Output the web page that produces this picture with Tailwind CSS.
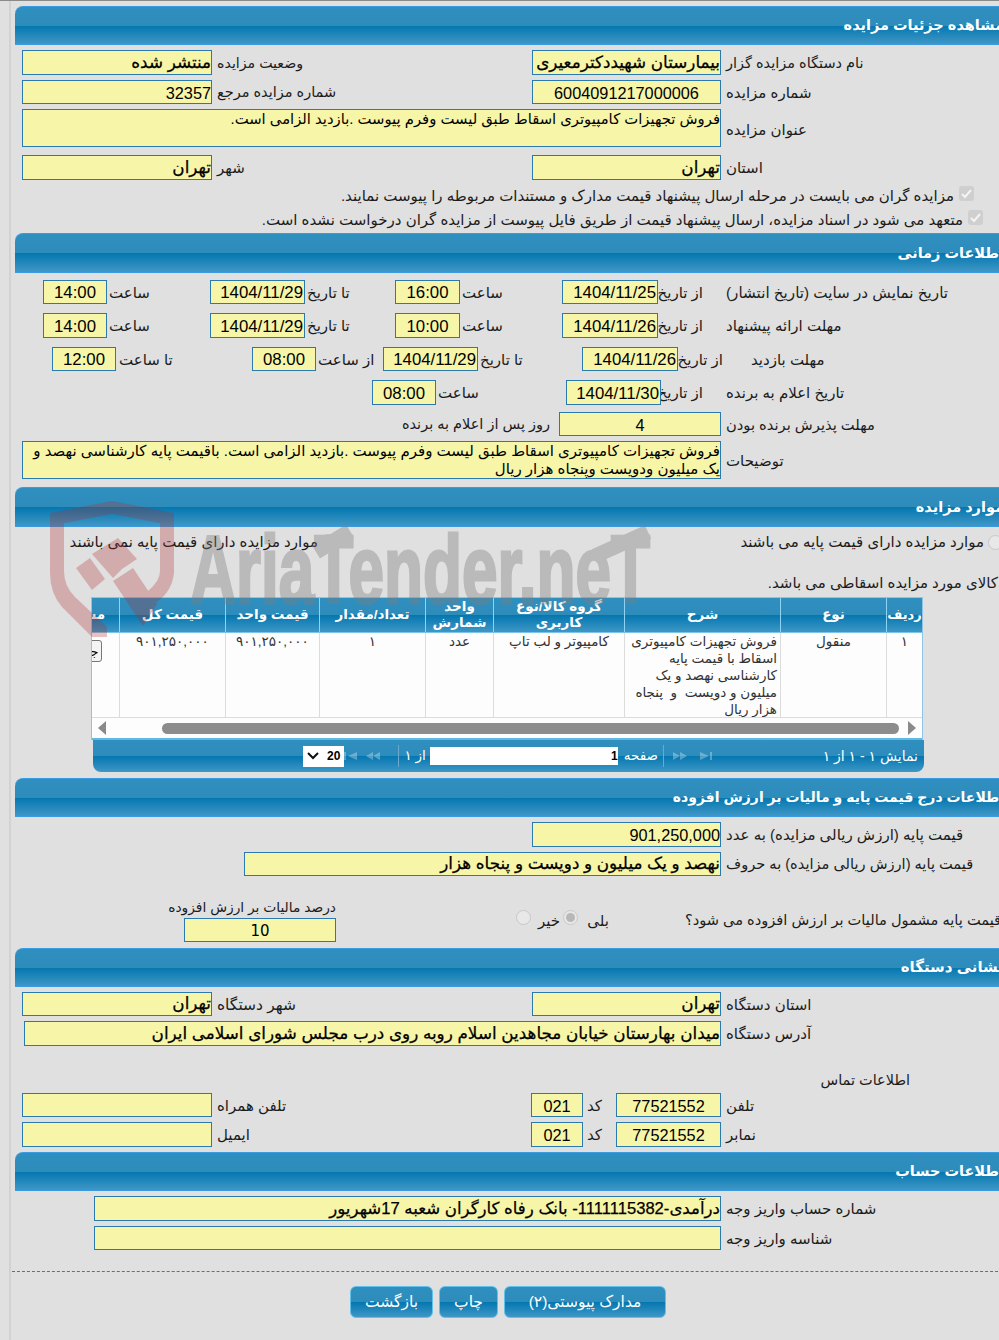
<!DOCTYPE html>
<html lang="fa">
<head>
    <meta charset="UTF-8">
    <title>مشاهده جزئیات مزایده</title>
    <script src="https://cdn.jsdelivr.net/npm/@tailwindcss/browser@4"></script>
</head>
<body class="relative h-[1340px] w-[999px] overflow-hidden border-t border-[#8a8a8a] bg-[#e0e0e0] font-['Liberation_Sans','DejaVu_Sans',sans-serif] text-[15px] text-[#1c1c1c]">
<div class="ml-[9px] h-[1339px] w-[1020px] border-l-2 border-[#d2d2d2] pl-[4px] pt-[5px]">
<div dir="rtl" class="w-[1003px]">

    <!-- جزئیات مزایده -->
    <div class="flex h-[39px] items-center rounded-tl-[8px] border-y border-[#3a9be0] bg-[linear-gradient(#2f8fbf_0%,#2e8cbb_50%,#0477b0_51%,#3f97c6_100%)] pr-[14px] text-[14.5px] font-bold text-white">مشاهده جزئیات مزایده</div>

    <div class="mt-[5px] flex h-[25px] items-center">
        <div class="w-[297px] pl-[5px] pt-[2px] text-left text-[14.5px]">نام دستگاه مزایده گزار</div>
        <div class="h-[25px] w-[189px] overflow-hidden whitespace-nowrap border border-[#2a7ab0] bg-[#f7f5a7] text-right text-[16.8px] leading-[23px] text-black [-webkit-text-stroke:0.25px_black]">بیمارستان شهیددکترمعیری</div>
        <div class="w-[320px] pl-[5px] pt-[2px] text-left text-[14.2px]">وضعیت مزایده</div>
        <div class="h-[25px] w-[190px] overflow-hidden whitespace-nowrap border border-[#2a7ab0] bg-[#f7f5a7] text-right text-[16.8px] leading-[23px] text-black [-webkit-text-stroke:0.25px_black]">منتشر شده</div>
    </div>
    <div class="mt-[5px] flex h-[24px] items-center">
        <div class="w-[297px] pl-[5px] pt-[2px] text-left">شماره مزایده</div>
        <div class="h-[24px] w-[189px] border border-[#2a7ab0] bg-[#f7f5a7] text-center text-[16.3px] leading-[24px] text-black">6004091217000006</div>
        <div class="w-[320px] pl-[5px] pt-[2px] text-left text-[14.5px]">شماره مزایده مرجع</div>
        <div class="h-[24px] w-[190px] border border-[#2a7ab0] bg-[#f7f5a7] text-right text-[16.3px] leading-[24px] text-black">32357</div>
    </div>
    <div class="mt-[5px] flex h-[38px] items-center">
        <div class="w-[297px] pl-[5px] pt-[5px] text-left">عنوان مزایده</div>
        <div class="h-[38px] w-[699px] border border-[#2a7ab0] bg-[#f7f5a7] text-right text-[14.8px] leading-[19px] text-black">فروش تجهیزات کامپیوتری اسقاط طبق لیست وفرم پیوست .بازدید الزامی است.</div>
    </div>
    <div class="mt-[8px] flex h-[25px] items-center">
        <div class="w-[297px] pl-[5px] pt-[2px] text-left">استان</div>
        <div class="h-[25px] w-[189px] border border-[#2a7ab0] bg-[#f7f5a7] text-right text-[16.8px] leading-[23px] text-black [-webkit-text-stroke:0.25px_black]">تهران</div>
        <div class="w-[320px] pl-[5px] pt-[2px] text-left">شهر</div>
        <div class="h-[25px] w-[190px] border border-[#2a7ab0] bg-[#f7f5a7] text-right text-[16.8px] leading-[23px] text-black [-webkit-text-stroke:0.25px_black]">تهران</div>
    </div>
    <div class="mt-[4px] flex h-[24px] items-center pr-[44px]">
        <svg class="mb-[6px] ml-[5px] size-[15px] rounded-[3px] bg-[#cfcfcf]" viewBox="0 0 15 15"><path d="M3 8l3 3 6-7" fill="none" stroke="#f4f4f4" stroke-width="2"/></svg>
        <span class="whitespace-nowrap">مزایده گران می بایست در مرحله ارسال پیشنهاد قیمت مدارک و مستندات مربوطه را پیوست نمایند.</span>
    </div>
    <div class="flex h-[24px] items-center pr-[35px]">
        <svg class="mb-[6px] ml-[5px] size-[15px] rounded-[3px] bg-[#cfcfcf]" viewBox="0 0 15 15"><path d="M3 8l3 3 6-7" fill="none" stroke="#f4f4f4" stroke-width="2"/></svg>
        <span class="whitespace-nowrap">متعهد می شود در اسناد مزایده، ارسال پیشنهاد قیمت از طریق فایل پیوست از مزایده گران درخواست نشده است.</span>
    </div>

    <!-- اطلاعات زمانی -->
    <div class="mt-[1px] flex h-[40px] items-center rounded-tl-[8px] border-y border-[#3a9be0] bg-[linear-gradient(#2f8fbf_0%,#2e8cbb_50%,#0477b0_51%,#3f97c6_100%)] pr-[14px] pt-[1px] text-[14.5px] font-bold text-white">اطلاعات زمانی</div>

    <div class="mt-[7px] flex h-[24px] items-center">
        <div class="w-[292px] pt-[2px] text-left text-[15.2px]">تاریخ نمایش در سایت (تاریخ انتشار)</div>
        <div class="w-[68px] whitespace-nowrap pr-[23px] pt-[2px] text-right">از تاریخ</div>
        <div class="h-[24px] w-[96px] border border-[#2a7ab0] bg-[#f7f5a7] pr-[1px] text-right text-[16.8px] leading-[24px] text-black" dir="ltr">1404/11/25</div>
        <div class="w-[102px] pl-[2px] pt-[2px] text-left">ساعت</div>
        <div class="h-[24px] w-[65px] border border-[#2a7ab0] bg-[#f7f5a7] text-center text-[16.8px] leading-[24px] text-black" dir="ltr">16:00</div>
        <div class="w-[90px] pl-[2px] pt-[2px] text-left">تا تاریخ</div>
        <div class="h-[24px] w-[95px] border border-[#2a7ab0] bg-[#f7f5a7] pr-[1px] text-right text-[16.8px] leading-[24px] text-black" dir="ltr">1404/11/29</div>
        <div class="w-[103px] pl-[2px] pt-[2px] text-left">ساعت</div>
        <div class="h-[24px] w-[64px] border border-[#2a7ab0] bg-[#f7f5a7] text-center text-[16.8px] leading-[24px] text-black" dir="ltr">14:00</div>
    </div>
    <div class="mt-[9px] flex h-[25px] items-center">
        <div class="w-[292px] pt-[2px] text-left">مهلت ارائه پیشنهاد</div>
        <div class="w-[68px] whitespace-nowrap pr-[23px] pt-[2px] text-right">از تاریخ</div>
        <div class="h-[25px] w-[96px] border border-[#2a7ab0] bg-[#f7f5a7] pr-[1px] text-right text-[16.8px] leading-[25px] text-black" dir="ltr">1404/11/26</div>
        <div class="w-[102px] pl-[2px] pt-[2px] text-left">ساعت</div>
        <div class="h-[25px] w-[65px] border border-[#2a7ab0] bg-[#f7f5a7] text-center text-[16.8px] leading-[25px] text-black" dir="ltr">10:00</div>
        <div class="w-[90px] pl-[2px] pt-[2px] text-left">تا تاریخ</div>
        <div class="h-[25px] w-[95px] border border-[#2a7ab0] bg-[#f7f5a7] pr-[1px] text-right text-[16.8px] leading-[25px] text-black" dir="ltr">1404/11/29</div>
        <div class="w-[103px] pl-[2px] pt-[2px] text-left">ساعت</div>
        <div class="h-[25px] w-[64px] border border-[#2a7ab0] bg-[#f7f5a7] text-center text-[16.8px] leading-[25px] text-black" dir="ltr">14:00</div>
    </div>
    <div class="mt-[9px] flex h-[24px] items-center">
        <div class="w-[267px] pt-[2px] text-left">مهلت بازدید</div>
        <div class="w-[73px] whitespace-nowrap pr-[28px] pt-[2px] text-right">از تاریخ</div>
        <div class="h-[24px] w-[96px] border border-[#2a7ab0] bg-[#f7f5a7] pr-[1px] text-right text-[16.8px] leading-[24px] text-black" dir="ltr">1404/11/26</div>
        <div class="w-[104px] pl-[2px] pt-[2px] text-left">تا تاریخ</div>
        <div class="h-[24px] w-[95px] border border-[#2a7ab0] bg-[#f7f5a7] pr-[1px] text-right text-[16.8px] leading-[24px] text-black" dir="ltr">1404/11/29</div>
        <div class="w-[67px] pl-[2px] pt-[2px] text-left">از ساعت</div>
        <div class="h-[24px] w-[64px] border border-[#2a7ab0] bg-[#f7f5a7] text-center text-[16.8px] leading-[24px] text-black" dir="ltr">08:00</div>
        <div class="w-[136px] whitespace-nowrap pl-[3px] pt-[2px] text-left">تا ساعت</div>
        <div class="h-[24px] w-[64px] border border-[#2a7ab0] bg-[#f7f5a7] text-center text-[16.8px] leading-[24px] text-black" dir="ltr">12:00</div>
    </div>
    <div class="mt-[9px] flex h-[25px] items-center">
        <div class="w-[292px] pt-[2px] text-left">تاریخ اعلام به برنده</div>
        <div class="w-[65px] whitespace-nowrap pr-[23px] pt-[2px] text-right">از تاریخ</div>
        <div class="h-[25px] w-[95px] border border-[#2a7ab0] bg-[#f7f5a7] pr-[1px] text-right text-[16.8px] leading-[25px] text-black" dir="ltr">1404/11/30</div>
        <div class="w-[130px] pl-[2px] pt-[2px] text-left">ساعت</div>
        <div class="h-[25px] w-[64px] border border-[#2a7ab0] bg-[#f7f5a7] text-center text-[16.8px] leading-[25px] text-black" dir="ltr">08:00</div>
    </div>
    <div class="mt-[7px] flex h-[24px] items-center">
        <div class="w-[297px] pl-[5px] pt-[2px] text-left text-[14.7px]">مهلت پذیرش برنده بودن</div>
        <div class="h-[24px] w-[162px] border border-[#2a7ab0] bg-[#f7f5a7] text-center text-[16.3px] leading-[24px] text-black">4</div>
        <div class="pr-[9px] pt-[2px] text-[14.5px]">روز پس از اعلام به برنده</div>
    </div>
    <div class="mt-[5px] flex h-[38px] items-center">
        <div class="w-[297px] pl-[5px] pt-[3px] text-left">توضیحات</div>
        <div class="h-[38px] w-[699px] overflow-hidden whitespace-nowrap border border-[#2a7ab0] bg-[#f7f5a7] text-right text-[15px] leading-[18px] text-black">فروش تجهیزات کامپیوتری اسقاط طبق لیست وفرم پیوست .بازدید الزامی است. باقیمت پایه کارشناسی نهصد و<br>یک میلیون ودویست وپنجاه هزار ریال</div>
    </div>

    <!-- موارد مزایده -->
    <div class="mt-[8px] flex h-[40px] items-center rounded-tl-[8px] border-y border-[#3a9be0] bg-[linear-gradient(#2f8fbf_0%,#2e8cbb_50%,#0477b0_51%,#3f97c6_100%)] pr-[14px] pt-[1px] text-[14.5px] font-bold text-white">موارد مزایده</div>

    <div class="mt-[4px] flex h-[22px] items-center">
        <div class="w-[34px] pl-[4px]"><div class="mr-auto size-[15px] rounded-full border border-[#c8c8c8] bg-[#e8e8e8]"></div></div>
        <div class="w-[666px] text-right">موارد مزایده دارای قیمت پایه می باشند</div>
        <div class="whitespace-nowrap">موارد مزایده دارای قیمت پایه نمی باشند</div>
    </div>
    <div class="mt-[19px] h-[20px] whitespace-nowrap pr-[20px] pt-[1px] leading-[20px]">کالای مورد مزایده اسقاطی می باشد.</div>

    <!-- جدول -->
    <div class="mr-[95px] mt-[5px] w-[832px] overflow-hidden border-x border-t border-[#8ec5e6] bg-[#fdfdfd]">
        <div class="flex h-[35px] border-b border-[#7cc4ea] bg-[linear-gradient(#2f8fbf_0%,#2e8cbb_50%,#0477b0_51%,#3f97c6_100%)] text-center text-[13.5px] font-bold leading-[16px] text-white">
            <div class="flex w-[36px] shrink-0 items-center justify-center border-l border-[#8fd3f4] text-[13px]">ردیف</div>
            <div class="flex w-[106px] shrink-0 items-center justify-center border-l border-[#8fd3f4]">نوع</div>
            <div class="flex w-[156px] shrink-0 items-center justify-center border-l border-[#8fd3f4]">شرح</div>
            <div class="flex w-[131px] shrink-0 items-center justify-center border-l border-[#8fd3f4]">گروه کالا/نوع<br>کاربری</div>
            <div class="flex w-[68px] shrink-0 items-center justify-center border-l border-[#8fd3f4]">واحد<br>شمارش</div>
            <div class="flex w-[106px] shrink-0 items-center justify-center border-l border-[#8fd3f4]">تعداد/مقدار</div>
            <div class="flex w-[94px] shrink-0 items-center justify-center border-l border-[#8fd3f4]">قیمت واحد</div>
            <div class="flex w-[106px] shrink-0 items-center justify-center border-l border-[#8fd3f4]">قیمت کل</div>
            <div class="flex w-[80px] shrink-0 items-center justify-center">مشاهده</div>
        </div>
        <div class="flex h-[85px] border-b border-[#dcdcdc] text-center text-[13.5px] leading-[17px] text-[#333]">
            <div class="w-[36px] shrink-0 border-l border-[#dcdcdc]">۱</div>
            <div class="w-[106px] shrink-0 border-l border-[#dcdcdc]">منقول</div>
            <div class="w-[156px] shrink-0 overflow-hidden whitespace-nowrap border-l border-[#dcdcdc] pr-[3px] text-right">فروش تجهیزات کامپیوتری<br>اسقاط با قیمت پایه<br>کارشناسی نهصد و یک<br>میلیون و دویست&nbsp; و&nbsp; پنجاه<br>هزار ریال</div>
            <div class="w-[131px] shrink-0 border-l border-[#dcdcdc]">کامپیوتر و لب تاپ</div>
            <div class="w-[68px] shrink-0 border-l border-[#dcdcdc]">عدد</div>
            <div class="w-[106px] shrink-0 border-l border-[#dcdcdc]">۱</div>
            <div class="w-[94px] shrink-0 border-l border-[#dcdcdc]">۹۰۱,۲۵۰,۰۰۰</div>
            <div class="w-[106px] shrink-0 border-l border-[#dcdcdc]">۹۰۱,۲۵۰,۰۰۰</div>
            <div class="w-[80px] shrink-0 pr-[17px] pt-[7px]"><div class="flex h-[22px] w-[46px] items-center justify-center rounded-[3px] border border-[#777] bg-[#f4f4f4] text-[13px] text-black">جزئیات</div></div>
        </div>
        <div class="flex h-[22px] items-center border-b-2 border-[#62b8e4] px-[6px]">
            <svg class="shrink-0" width="8" height="14" viewBox="0 0 8 14"><path d="M0 0l8 7-8 7z" fill="#8a8a8a"/></svg>
            <div class="mr-[9px] h-[11px] w-[737px] shrink-0 rounded-full bg-[#8c8c8c]"></div>
            <svg class="mr-auto shrink-0" width="8" height="14" viewBox="0 0 8 14"><path d="M8 0L0 7l8 7z" fill="#8a8a8a"/></svg>
        </div>
    </div>
    <div class="mr-[94px] flex h-[32px] w-[831px] items-center rounded-b-[8px] bg-[linear-gradient(#2f8fbf_0%,#2e8cbb_50%,#0477b0_51%,#3f97c6_100%)] text-[13.5px] text-white">
        <div class="flex w-[260px] shrink-0 items-center justify-between pl-[9px] pr-[6px]">
            <span class="text-[14px]">نمایش ۱ - ۱ از ۱</span>
            <div class="flex items-center gap-[13px] opacity-30" dir="ltr">
                <svg width="14" height="8" viewBox="0 0 14 8"><path d="M0 0l7 4-7 4zM7 0l7 4-7 4z" fill="#fff"/></svg>
                <svg width="12" height="8" viewBox="0 0 12 8"><path d="M0 0l9 4-9 4zM10 0h2v8h-2z" fill="#fff"/></svg>
            </div>
        </div>
        <div class="h-[22px] w-px shrink-0 bg-[#6aa8cc]"></div>
        <div class="shrink-0 pr-[5px]">صفحه</div>
        <div class="mr-[6px] h-[18px] w-[188px] shrink-0 bg-white text-right text-[12px] font-bold leading-[18px] text-black">1</div>
        <div class="mr-[4px] shrink-0">از ۱</div>
        <div class="mr-[5px] h-[22px] w-px shrink-0 bg-[#6aa8cc]"></div>
        <div class="flex w-[54px] shrink-0 items-center gap-[9px] pr-[10px] opacity-30" dir="ltr">
            <svg width="13" height="8" viewBox="0 0 13 8"><path d="M0 0h2v8H0zM13 0L4 4l9 4z" fill="#fff"/></svg>
            <svg width="14" height="8" viewBox="0 0 14 8"><path d="M7 0L0 4l7 4zM14 0L7 4l7 4z" fill="#fff"/></svg>
        </div>
        <div class="flex h-[21px] w-[41px] shrink-0 items-center justify-between bg-white px-[4px] text-[12px] font-bold text-black" dir="ltr">
            <svg width="12" height="8" viewBox="0 0 12 8"><path d="M1 1l5 5 5-5" fill="none" stroke="#111" stroke-width="2"/></svg>
            <span>20</span>
        </div>
    </div>

    <!-- قیمت پایه -->
    <div class="mt-[6px] flex h-[39px] items-center rounded-tl-[8px] border-y border-[#3a9be0] bg-[linear-gradient(#2f8fbf_0%,#2e8cbb_50%,#0477b0_51%,#3f97c6_100%)] pr-[14px] text-[14px] font-bold text-white">اطلاعات درج قیمت پایه و مالیات بر ارزش افزوده</div>

    <div class="mt-[5px] flex h-[25px] items-center">
        <div class="w-[297px] pl-[5px] pt-[2px] text-left">قیمت پایه (ارزش ریالی مزایده) به عدد</div>
        <div class="h-[25px] w-[189px] border border-[#2a7ab0] bg-[#f7f5a7] text-right text-[16.3px] leading-[25px] text-black">901,250,000</div>
    </div>
    <div class="mt-[5px] flex h-[24px] items-center">
        <div class="w-[297px] whitespace-nowrap pl-[5px] pt-[2px] text-left text-[14.6px]">قیمت پایه (ارزش ریالی مزایده) به حروف</div>
        <div class="h-[24px] w-[477px] border border-[#2a7ab0] bg-[#f7f5a7] text-right text-[16.8px] leading-[22px] text-black [-webkit-text-stroke:0.25px_black]">نهصد و یک میلیون و دویست و پنجاه هزار</div>
    </div>
    <div class="mt-[19px] flex h-[47px] items-end">
        <div class="mb-[8px] h-[24px] w-[333px] whitespace-nowrap text-left text-[14.6px]">قیمت پایه مشمول مالیات بر ارزش افزوده می شود؟</div>
        <div class="mb-[8px] flex h-[24px] w-[349px] items-start pr-[76px]">
            <span class="w-[31px]">بلی</span>
            <span class="flex size-[15px] items-center justify-center rounded-full border border-[#c8c8c8] bg-[#e8e8e8]"><span class="size-[9px] rounded-full bg-[#b8b8b8]"></span></span>
            <span class="w-[30px] pr-[3px]">خیر</span>
            <span class="mr-[2px] size-[15px] rounded-full border border-[#c8c8c8] bg-[#e8e8e8]"></span>
        </div>
        <div class="w-[152px]">
            <div class="h-[22px] whitespace-nowrap pt-[3px] text-right text-[13.8px]">درصد مالیات بر ارزش افزوده</div>
            <div class="mt-[1px] h-[24px] border border-[#2a7ab0] bg-[#f7f5a7] text-center font-['DejaVu_Sans'] text-[15px] leading-[24px] text-black">10</div>
        </div>
    </div>

    <!-- نشانی دستگاه -->
    <div class="mt-[6px] flex h-[39px] items-center rounded-tl-[8px] border-y border-[#3a9be0] bg-[linear-gradient(#2f8fbf_0%,#2e8cbb_50%,#0477b0_51%,#3f97c6_100%)] pr-[14px] text-[15px] font-bold text-white">نشانی دستگاه</div>

    <div class="mt-[5px] flex h-[24px] items-center">
        <div class="w-[297px] pl-[5px] pt-[2px] text-left">استان دستگاه</div>
        <div class="h-[24px] w-[189px] border border-[#2a7ab0] bg-[#f7f5a7] text-right text-[16.8px] leading-[22px] text-black [-webkit-text-stroke:0.25px_black]">تهران</div>
        <div class="w-[320px] pl-[5px] pt-[2px] text-left text-[15.5px]">شهر دستگاه</div>
        <div class="h-[24px] w-[190px] border border-[#2a7ab0] bg-[#f7f5a7] text-right text-[16.8px] leading-[22px] text-black [-webkit-text-stroke:0.25px_black]">تهران</div>
    </div>
    <div class="mt-[5px] flex h-[25px] items-center">
        <div class="w-[297px] pl-[5px] pt-[2px] text-left">آدرس دستگاه</div>
        <div class="h-[25px] w-[697px] whitespace-nowrap border border-[#2a7ab0] bg-[#f7f5a7] text-right text-[16.8px] leading-[23px] text-black [-webkit-text-stroke:0.25px_black]">میدان بهارستان خیابان مجاهدین اسلام روبه روی درب مجلس شورای اسلامی ایران</div>
    </div>
    <div class="mt-[24px] h-[20px] pr-[108px] text-[14.5px] leading-[20px]">اطلاعات تماس</div>
    <div class="mt-[3px] flex h-[24px] items-center">
        <div class="w-[297px] pl-[5px] pt-[2px] text-left">تلفن</div>
        <div class="h-[24px] w-[105px] border border-[#2a7ab0] bg-[#f7f5a7] text-center text-[16.3px] leading-[24px] text-black">77521552</div>
        <div class="w-[33px] pl-[4px] pt-[2px] text-left">کد</div>
        <div class="h-[24px] w-[52px] border border-[#2a7ab0] bg-[#f7f5a7] text-center text-[16.3px] leading-[24px] text-black">021</div>
        <div class="w-[319px] pl-[5px] pt-[2px] text-left">تلفن همراه</div>
        <div class="h-[24px] w-[190px] border border-[#2a7ab0] bg-[#f7f5a7]"></div>
    </div>
    <div class="mt-[5px] flex h-[25px] items-center">
        <div class="w-[297px] pl-[5px] pt-[2px] text-left">نمابر</div>
        <div class="h-[25px] w-[105px] border border-[#2a7ab0] bg-[#f7f5a7] text-center text-[16.3px] leading-[25px] text-black">77521552</div>
        <div class="w-[33px] pl-[4px] pt-[2px] text-left">کد</div>
        <div class="h-[25px] w-[52px] border border-[#2a7ab0] bg-[#f7f5a7] text-center text-[16.3px] leading-[25px] text-black">021</div>
        <div class="w-[319px] pl-[5px] pt-[2px] text-left">ایمیل</div>
        <div class="h-[25px] w-[190px] border border-[#2a7ab0] bg-[#f7f5a7]"></div>
    </div>

    <!-- اطلاعات حساب -->
    <div class="mt-[5px] flex h-[39px] items-center rounded-tl-[8px] border-y border-[#3a9be0] bg-[linear-gradient(#2f8fbf_0%,#2e8cbb_50%,#0477b0_51%,#3f97c6_100%)] pr-[14px] text-[14.5px] font-bold text-white">اطلاعات حساب</div>

    <div class="mt-[5px] flex h-[25px] items-center">
        <div class="w-[297px] pl-[5px] pt-[2px] text-left">شماره حساب واریز وجه</div>
        <div class="h-[25px] w-[627px] whitespace-nowrap border border-[#2a7ab0] bg-[#f7f5a7] text-right text-[16.6px] leading-[23px] text-black [-webkit-text-stroke:0.25px_black]">درآمدی-1111115382- بانک رفاه کارگران شعبه 17شهریور</div>
    </div>
    <div class="mt-[5px] flex h-[24px] items-center">
        <div class="w-[297px] pl-[5px] pt-[2px] text-left">شناسه واریز وجه</div>
        <div class="h-[24px] w-[627px] border border-[#2a7ab0] bg-[#f7f5a7]"></div>
    </div>

    <div class="ml-[-3px] mt-[21px] border-t border-dashed border-[#3a7ea8]"></div>

    <div class="mt-[14px] flex h-[32px] gap-[6px] text-[15.5px] text-white">
        <div class="mr-[352px] flex h-[32px] w-[162px] items-center justify-center rounded-[6px] border border-[#62c0ea] bg-[linear-gradient(#2f8fbf_0%,#2e8cbb_50%,#0477b0_51%,#3f97c6_100%)]">مدارک پیوستی(۲)</div>
        <div class="flex h-[32px] w-[59px] items-center justify-center rounded-[6px] border border-[#62c0ea] bg-[linear-gradient(#2f8fbf_0%,#2e8cbb_50%,#0477b0_51%,#3f97c6_100%)]">چاپ</div>
        <div class="flex h-[32px] w-[83px] items-center justify-center rounded-[6px] border border-[#62c0ea] bg-[linear-gradient(#2f8fbf_0%,#2e8cbb_50%,#0477b0_51%,#3f97c6_100%)]">بازگشت</div>
    </div>

</div>
</div>

<!-- watermark -->
<svg class="pointer-events-none absolute left-0 top-0" width="999" height="640" viewBox="0 0 999 640">
    <g fill="#b02a2a" opacity="0.28">
        <path fill-rule="evenodd" d="M50 512L112 500 174 512V572Q172 590 158 600L143 612 136 600 148 590Q160 580 160 570V522L112 513 64 522V570Q64 585 75 596L107 626V636L92 636 62 606Q50 592 50 572Z"/>
        <path d="M76 567L90 557 105 578 92 589Z"/>
        <path d="M92 553L118 537 137 558 122 568 113 577Z"/>
        <path d="M113 580L133 567 157 603 143 625Z"/>
    </g>
    <g opacity="0.38" fill="#7d7d7d">
        <text x="190" y="602" font-family="Liberation Sans" font-weight="700" font-size="96" stroke="#7d7d7d" stroke-width="3" textLength="460" lengthAdjust="spacingAndGlyphs">AriaTender.neT</text>
        <line x1="316" y1="551" x2="350" y2="530" stroke="#7d7d7d" stroke-width="15"/>
        <line x1="595" y1="555" x2="648" y2="531" stroke="#7d7d7d" stroke-width="15"/>
        <circle cx="328" cy="540" r="6" fill="none" stroke="#7d7d7d" stroke-width="2"/>
    </g>
</svg>
</body>
</html>
